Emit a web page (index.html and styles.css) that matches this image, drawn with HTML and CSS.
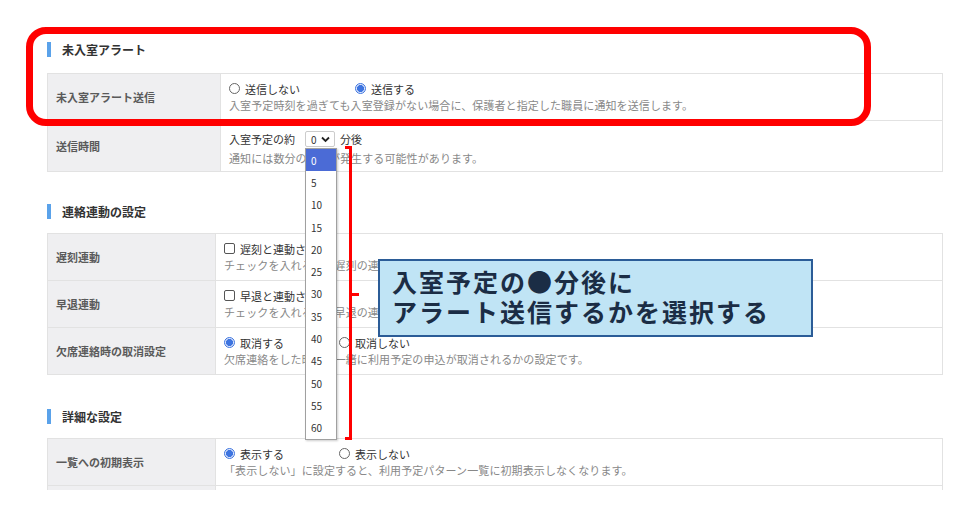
FILE: index.html
```html
<!DOCTYPE html>
<html lang="ja">
<head>
    <meta charset="UTF-8">
    <meta name="viewport" content="width=device-width, initial-scale=1.0">
    <title>アラート設定</title>
    <link rel="stylesheet" href="styles.css">
</head>
<body>

    <div class="page">

        <!-- 未入室アラート -->
        <section class="sec sec-alert">
            <h2 class="sec-title">未入室アラート</h2>
            <div class="table">
                <div class="row">
                    <div class="th">未入室アラート送信</div>
                    <div class="td">
                        <div class="opts">
                            <label class="opt"><span class="radio"></span>送信しない</label>
                            <label class="opt"><span class="radio on"></span>送信する</label>
                        </div>
                        <p class="desc">入室予定時刻を過ぎても入室登録がない場合に、保護者と指定した職員に通知を送信します。</p>
                    </div>
                </div>
                <div class="row row-time">
                    <div class="th">送信時間</div>
                    <div class="td">
                        <div class="opts">
                            入室予定の約
                            <span class="select">0
                                <svg width="9" height="7" viewBox="0 0 9 7"><path d="M1 1.5 L4.5 5 L8 1.5" fill="none" stroke="#222" stroke-width="1.8"/></svg>
                                <!-- 開いたドロップダウン -->
                                <span class="dropdown">
                                    <span class="dd-item selected">0</span>
                                    <span class="dd-item">5</span>
                                    <span class="dd-item">10</span>
                                    <span class="dd-item">15</span>
                                    <span class="dd-item">20</span>
                                    <span class="dd-item">25</span>
                                    <span class="dd-item">30</span>
                                    <span class="dd-item">35</span>
                                    <span class="dd-item">40</span>
                                    <span class="dd-item">45</span>
                                    <span class="dd-item">50</span>
                                    <span class="dd-item">55</span>
                                    <span class="dd-item">60</span>
                                </span>
                            </span>
                            <span class="unit">分後</span>
                        </div>
                        <p class="desc">通知には数分の遅延が発生する可能性があります。</p>
                    </div>
                </div>
            </div>
        </section>

        <!-- 連絡連動の設定 -->
        <section class="sec">
            <h2 class="sec-title">連絡連動の設定</h2>
            <div class="table">
                <div class="row">
                    <div class="th">遅刻連動</div>
                    <div class="td">
                        <div class="opts">
                            <label class="opt"><span class="check"></span>遅刻と連動させる</label>
                        </div>
                        <p class="desc">チェックを入れると、遅刻の連絡があった場合に入室予定時刻が変更されます。</p>
                    </div>
                </div>
                <div class="row">
                    <div class="th">早退連動</div>
                    <div class="td">
                        <div class="opts">
                            <label class="opt"><span class="check"></span>早退と連動させる</label>
                        </div>
                        <p class="desc">チェックを入れると、早退の連絡があった場合に退室予定時刻が変更されます。</p>
                    </div>
                </div>
                <div class="row">
                    <div class="th">欠席連絡時の取消設定</div>
                    <div class="td">
                        <div class="opts">
                            <label class="opt"><span class="radio on"></span>取消する</label>
                            <label class="opt"><span class="radio"></span>取消しない</label>
                        </div>
                        <p class="desc">欠席連絡をした時に、一緒に利用予定の申込が取消されるかの設定です。</p>
                    </div>
                </div>
            </div>
        </section>

        <!-- 詳細な設定 -->
        <section class="sec sec-detail">
            <h2 class="sec-title">詳細な設定</h2>
            <div class="table">
                <div class="row">
                    <div class="th">一覧への初期表示</div>
                    <div class="td">
                        <div class="opts">
                            <label class="opt"><span class="radio on"></span>表示する</label>
                            <label class="opt"><span class="radio"></span>表示しない</label>
                        </div>
                        <p class="desc">「表示しない」に設定すると、利用予定パターン一覧に初期表示しなくなります。</p>
                    </div>
                </div>
                <div class="row">
                    <div class="th"></div>
                    <div class="td"></div>
                </div>
            </div>
        </section>

        <!-- 注釈 -->
        <div class="mark-box"></div>
        <div class="bracket"></div>
        <div class="callout">入室予定の●分後に<br>アラート送信するかを選択する</div>

    </div>

</body>
</html>
```

FILE: styles.css
```css
* {
    box-sizing: border-box;
}
body {
    margin: 0;
    background: #fff;
    font-family: "Noto Sans CJK JP", "Noto Sans", sans-serif;
    color: #333;
}
.page {
    position: relative;
    width: 966px;
    height: 490px;
    overflow: hidden;
    padding: 38px 23px 0 47px;
}
/* 見出し */
.sec-title {
    display: flex;
    align-items: center;
    height: 22px;
    margin: 28px 0 11px;
    font-size: 12px;
    font-weight: bold;
    color: #333;
}
.sec-title::before {
    content: "";
    width: 4px;
    height: 15px;
    background: #5aa2ea;
    margin-right: 11px;
}
.sec-alert .sec-title {
    margin-top: 0;
    margin-bottom: 13px;
}
.sec-detail .sec-title {
    margin-top: 30px;
}
/* テーブル */
.table {
    border: 1px solid #e2e2e2;
    border-bottom: none;
}
.row {
    display: grid;
    grid-template-columns: 168px 1fr;
    min-height: 47px;
    border-bottom: 1px solid #e2e2e2;
}
.sec-alert .row {
    grid-template-columns: 173px 1fr;
    min-height: 46px;
}
.th {
    display: flex;
    align-items: center;
    padding-left: 8px;
    background: #efeff1;
    border-right: 1px solid #e2e2e2;
    font-size: 11px;
    font-weight: bold;
    color: #5a5a5a;
}
.td {
    display: flex;
    flex-direction: column;
    justify-content: center;
    padding: 6px 8px;
    font-size: 11px;
}
.opts {
    display: flex;
    align-items: center;
    height: 17px;
    color: #333;
}
.opt {
    display: flex;
    align-items: center;
    gap: 5px;
    width: 115px;
}
.sec-alert .opt {
    width: 126px;
}
.desc {
    margin: 0;
    line-height: 17px;
    color: #888;
    letter-spacing: 0.1px;
}
.radio {
    flex: none;
    width: 11px;
    height: 11px;
    border: 1px solid #666;
    border-radius: 50%;
    background: #fff;
}
.radio.on {
    border-color: #3d74e0;
    background: radial-gradient(circle, #3d74e0 0 3.2px, #dfe8fb 3.8px);
}
.check {
    flex: none;
    width: 11px;
    height: 11px;
    border: 1px solid #555;
    border-radius: 2px;
}
/* 送信時間 */
.sec-alert .row-time {
    min-height: 51px;
}
.row-time .td {
    justify-content: flex-start;
    padding: 9px 8px 4px;
}
.row-time .opts {
    height: 18px;
}
.row-time .desc {
    margin-top: 2px;
}
.select {
    position: relative;
    display: flex;
    align-items: center;
    justify-content: space-between;
    width: 30px;
    height: 16px;
    margin-left: 10px;
    padding: 0 4px 0 5px;
    border: 1px solid #ccc;
    border-radius: 2px;
    font-size: 10px;
}
.unit {
    margin-left: 5px;
}
.dropdown {
    position: absolute;
    top: 16px;
    left: -1px;
    z-index: 5;
    display: flex;
    flex-direction: column;
    width: 32px;
    background: #fff;
    border: 1px solid #a0a0a0;
    box-shadow: 1px 1px 2px rgba(0, 0, 0, 0.2);
}
.dd-item {
    display: flex;
    align-items: center;
    height: 22.3px;
    padding-left: 5px;
    font-size: 10px;
    color: #333;
}
.dd-item.selected {
    background: #4b6bd6;
    color: #fff;
}
/* 注釈 */
.mark-box {
    position: absolute;
    left: 26px;
    top: 27px;
    width: 845px;
    height: 99px;
    border: 7px solid #f00;
    border-radius: 20px;
}
.bracket {
    position: absolute;
    left: 345px;
    top: 146px;
    width: 7px;
    height: 294px;
    border: 3px solid #f00;
    border-left: none;
    z-index: 6;
}
.bracket::after {
    content: "";
    position: absolute;
    right: -10px;
    top: 144px;
    width: 8px;
    height: 3px;
    background: #f00;
}
.callout {
    position: absolute;
    left: 378px;
    top: 259px;
    width: 435px;
    height: 78px;
    padding: 5px 0 0 12px;
    background: #c0e4f5;
    border: 2px solid #2b5c97;
    z-index: 6;
    font-size: 25px;
    font-weight: bold;
    line-height: 30px;
    letter-spacing: 2px;
    color: #1b2d45;
}
```
